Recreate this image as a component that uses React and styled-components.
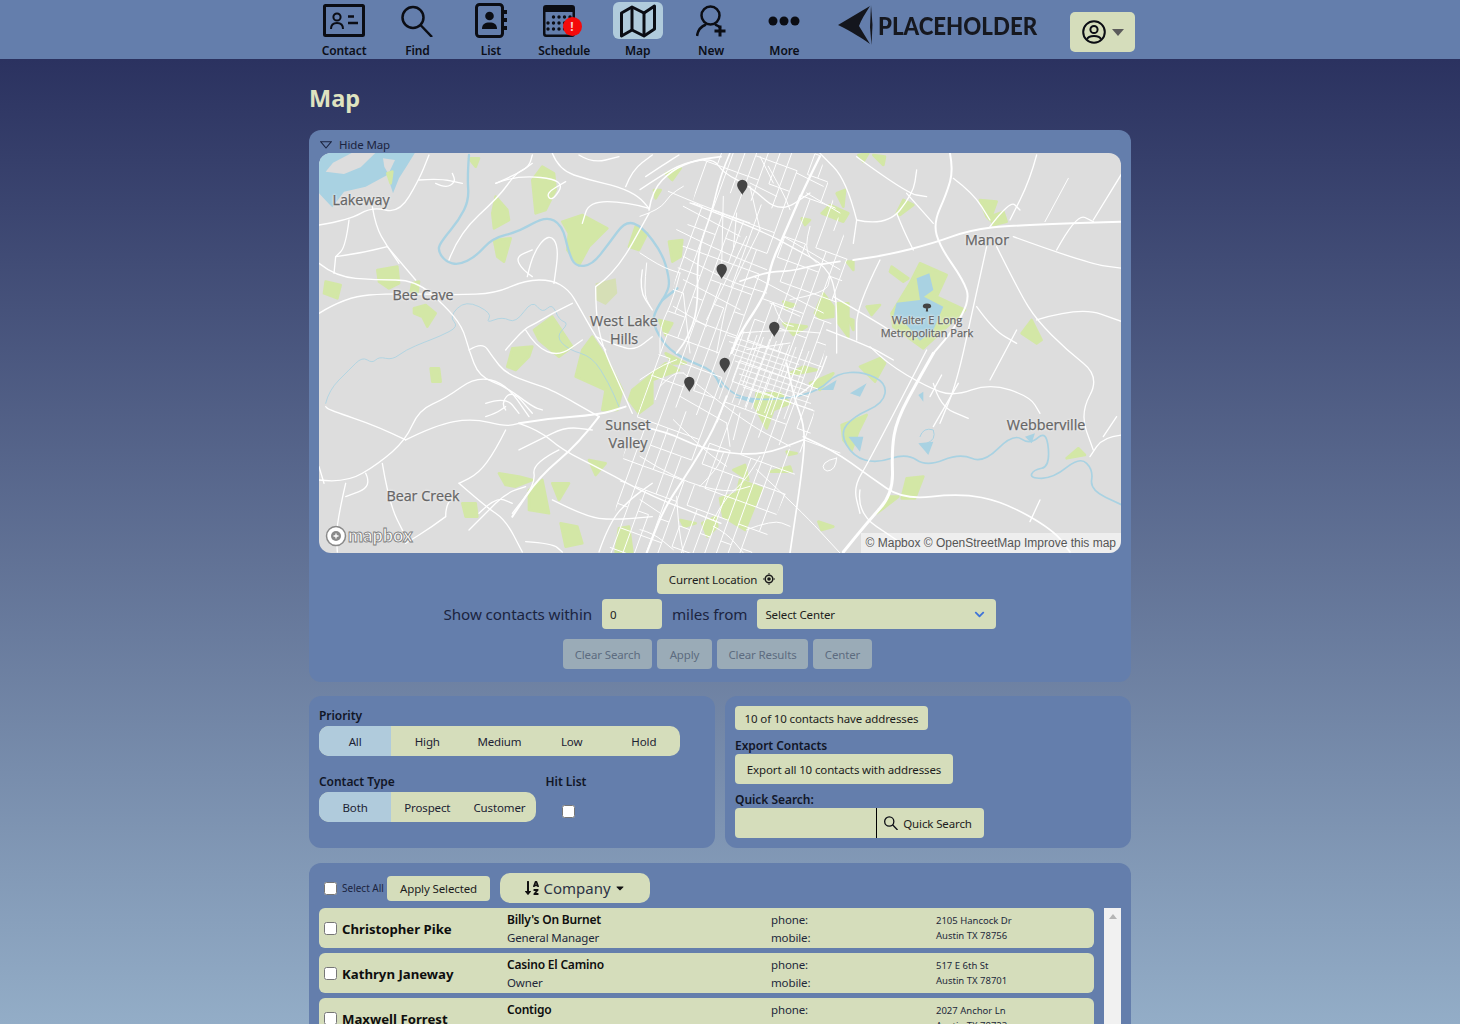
import React from 'react';
import styled, { createGlobalStyle, css } from 'styled-components';
import { FaSortAlphaDown, FaChevronDown, FaCaretDown } from 'react-icons/fa';

const GlobalStyle = createGlobalStyle`
  html, body {
    margin: 0;
    height: 100%;
    overflow: hidden;
  }
  body {
    font-family: 'Noto Sans', 'Open Sans', Arial, sans-serif;
    color: #111;
  }
`;

const smallText = css`
  font-family: 'Noto Sans', 'Open Sans', Arial, sans-serif;
  font-size: 11.5px;
  letter-spacing: -0.13px;
`;

const Page = styled.div`
  height: 1024px;
  overflow: hidden;
  display: flex;
  flex-direction: column;
  background: linear-gradient(180deg, #2b3260 59px, #93adc7 1024px);
`;

const Header = styled.header`
  height: 59px;
  flex: none;
  background: #647eac;
  display: flex;
  padding-left: 307.4px;
`;

const NavItem = styled.a`
  width: 73.4px;
  display: flex;
  flex-direction: column;
  align-items: center;
  position: relative;
`;

const NavIcon = styled.div`
  width: 50px;
  height: 40px;
  margin-top: 2px;
  border-radius: 6px;
  display: flex;
  align-items: center;
  justify-content: center;
  background: ${(p) => (p.$active ? '#b0cbdc' : 'transparent')};
`;

const NavLabel = styled.span`
  font-size: 12px;
  font-weight: 600;
  line-height: 16px;
  margin-top: 4px;
  letter-spacing: -0.1px;
  color: #0c0f18;
`;

const Badge = styled.span`
  position: absolute;
  left: 35px;
  top: 17px;
  width: 19px;
  height: 19px;
  border-radius: 50%;
  background: #f50a0a;
  color: #f6c9c9;
  font-size: 12px;
  font-weight: 700;
  line-height: 19px;
  text-align: center;
`;

const Logo = styled.div`
  display: flex;
  align-items: center;
  gap: 5px;
  margin-left: 16.6px;
  height: 50px;
  width: 232px;
`;

const LogoText = styled.span`
  font-family: 'Lato', 'Noto Sans', sans-serif;
  font-size: 25px;
  font-weight: 900;
  color: #16181f;
  filter: blur(0.5px);
  transform: scaleX(0.89);
  transform-origin: left center;
  white-space: nowrap;
`;

const ProfileButton = styled.button`
  width: 65px;
  height: 40px;
  margin-top: 12px;
  border: 0;
  border-radius: 5px;
  background: #d5ddbb;
  display: flex;
  align-items: center;
  justify-content: center;
  gap: 6px;
  padding: 0 0 0 1px;
`;

const Main = styled.main`
  width: 822px;
  margin-left: 309px;
  display: flex;
  flex-direction: column;
`;

const Title = styled.h1`
  margin: 23px 0 0 0;
  height: 48px;
  font-size: 23.5px;
  line-height: 32px;
  font-weight: 700;
  color: #dfe3c0;
`;

const Panel = styled.section`
  background: #647eac;
  border-radius: 12px;
`;

const MapPanel = styled(Panel)`
  height: 552px;
  box-sizing: border-box;
  padding: 6px 10px 0;
  display: flex;
  flex-direction: column;
  align-items: center;
`;

const HideMap = styled.div`
  ${smallText}
  align-self: flex-start;
  display: flex;
  align-items: center;
  gap: 7px;
  height: 17px;
  padding-left: 1px;
  color: #1b2440;
`;

const MapBox = styled.div`
  width: 802px;
  height: 400px;
  flex: none;
  position: relative;
  overflow: hidden;
  border-radius: 12px;
  background: #dddddd;
`;

const MapLabel = styled.span`
  position: absolute;
  left: ${(p) => p.$x}px;
  top: ${(p) => p.$y}px;
  transform: translate(-50%, -50%);
  font-family: 'Open Sans', sans-serif;
  font-size: ${(p) => p.$size || 14.3}px;
  line-height: ${(p) => p.$line || 18}px;
  text-align: center;
  white-space: nowrap;
  color: #666;
  -webkit-text-stroke: 0.25px #666;
  text-shadow: 0 0 2px #eee, 0 0 2px #eee, 0 0 3px #eee;
`;

const MapboxMark = styled.div`
  position: absolute;
  left: 6px;
  bottom: 6px;
  display: flex;
  align-items: center;
  gap: 1px;
`;

const MapboxWord = styled.span`
  font-family: 'Lato', sans-serif;
  font-size: 18px;
  line-height: 22px;
  font-weight: 900;
  margin-top: -3px;
  color: #fff;
  -webkit-text-stroke: 0.9px #808080;
`;

const Attribution = styled.div`
  position: absolute;
  right: 0;
  bottom: 0;
  height: 20px;
  padding: 0 5px;
  background: rgba(255, 255, 255, 0.5);
  font-family: 'Liberation Sans', Arial, sans-serif;
  font-size: 12px;
  line-height: 20px;
  color: #555;
  white-space: nowrap;
`;

const Button = styled.button`
  ${smallText}
  flex: none;
  border: 0;
  border-radius: 4px;
  height: 30px;
  padding: 0 12px;
  background: #d5ddbb;
  color: #1c1c1c;
  white-space: nowrap;
  display: inline-flex;
  align-items: center;
  justify-content: center;
  gap: 6px;
`;

const LocationButton = styled(Button)`
  margin-top: 11px;
  width: 126px;
  padding: 0 0 0 4px;
`;

const WithinRow = styled.div`
  display: flex;
  align-items: center;
  margin-top: 5px;
  height: 30px;
  font-size: 15.2px;
  letter-spacing: -0.1px;
  color: #1b2440;
`;

const SmallInput = styled.input`
  ${smallText}
  box-sizing: border-box;
  width: 60px;
  height: 30px;
  margin: 0 10px;
  border: 0;
  border-radius: 4px;
  padding: 0 8px;
  background: #d5ddbb;
  color: #222;
`;

const CenterSelect = styled.div`
  ${smallText}
  box-sizing: border-box;
  width: 239px;
  height: 30px;
  margin-left: 10px;
  padding: 0 11px 0 8px;
  border-radius: 4px;
  background: #d5ddbb;
  display: flex;
  align-items: center;
  justify-content: space-between;
  color: #1c1c1c;
`;

const ActionRow = styled.div`
  display: flex;
  gap: 5px;
  margin: 10px 5px 0 0;
`;

const MutedButton = styled(Button)`
  background: #9aabb7;
  color: #5d6c80;
  width: ${(p) => p.$width}px;
  padding: 0;
`;

const FilterRow = styled.div`
  display: flex;
  gap: 10px;
  margin-top: 14px;
`;

const FilterPanel = styled(Panel)`
  width: 406px;
  height: 152px;
  box-sizing: border-box;
  padding: ${(p) => p.$padding};
  display: flex;
  flex-direction: column;
`;

const FieldLabel = styled.div`
  flex: none;
  font-size: 12px;
  font-weight: 600;
  line-height: 16px;
  letter-spacing: -0.05px;
  color: #111627;
`;

const Segments = styled.div`
  display: flex;
  width: max-content;
  height: 30px;
  margin-top: 2px;
  border-radius: 10px;
  overflow: hidden;
  background: #d5ddbb;
`;

const Segment = styled.div`
  ${smallText}
  width: 72.2px;
  display: flex;
  align-items: center;
  justify-content: center;
  color: #1c2233;
  background: ${(p) => (p.$active ? '#b0cbdc' : 'transparent')};
`;

const TypeRow = styled.div`
  display: flex;
  gap: 10px;
  margin-top: 18px;
`;

const HitCheck = styled.input`
  display: block;
  width: 13px;
  height: 13px;
  margin: 15px 0 0 16px;
`;

const Chip = styled.div`
  ${smallText}
  flex: none;
  width: 193px;
  box-sizing: border-box;
  height: 24px;
  border-radius: 4px;
  background: #d5ddbb;
  line-height: 25px;
  text-align: center;
  color: #1c1c1c;
`;

const ExportLabel = styled(FieldLabel)`
  margin-top: 8px;
`;

const ExportButton = styled(Button)`
  width: 218px;
  padding: 0;
`;

const SearchLabel = styled(FieldLabel)`
  margin-top: 8px;
`;

const SearchGroup = styled.div`
  display: flex;
  flex: none;
  width: 249px;
  height: 30px;
`;

const SearchInput = styled.input`
  box-sizing: border-box;
  width: 142px;
  border: 0;
  border-right: 1px solid #000;
  border-radius: 4px 0 0 4px;
  background: #d5ddbb;
  padding: 0 8px;
`;

const SearchButton = styled(Button)`
  width: 107px;
  padding: 0 5px 0 0;
  gap: 5px;
  border-radius: 0 4px 4px 0;
`;

const ContactsPanel = styled(Panel)`
  margin-top: 15px;
  padding: 10px 10px 0;
  flex: none;
`;

const Toolbar = styled.div`
  display: flex;
  align-items: center;
  height: 30px;
`;

const SelectCheck = styled.input`
  width: 13px;
  height: 13px;
  margin: 0 5px 0 5px;
`;

const SelectText = styled.span`
  font-size: 10px;
  color: #1b2440;
  width: 45px;
  white-space: nowrap;
`;

const ApplyButton = styled(Button)`
  width: 103px;
  height: 25px;
  padding: 0;
`;

const SortButton = styled(Button)`
  width: 150px;
  margin-left: 10px;
  border-radius: 10px;
  padding: 0;
  gap: 3px;
  font-size: 15px;
  letter-spacing: 0;
  color: #2b3245;
`;

const ListArea = styled.div`
  display: flex;
  gap: 10px;
  margin-top: 5px;
`;

const Rows = styled.div`
  width: 775px;
  display: flex;
  flex-direction: column;
  gap: 5px;
`;

const Row = styled.div`
  height: 40px;
  border-radius: 6px;
  background: #d5ddbb;
  display: grid;
  grid-template-columns: 188px 264px 165px 1fr;
  align-items: center;
`;

const NameCell = styled.div`
  display: flex;
  align-items: center;
  font-size: 13.2px;
  font-weight: 700;
  color: #0e0e0e;
`;

const NameText = styled.span`
  margin-top: 1px;
`;

const RowCheck = styled.input`
  width: 13px;
  height: 13px;
  margin: 0 5px 0 5px;
`;

const Stack = styled.div`
  ${smallText}
  padding-top: 2px;
  display: flex;
  flex-direction: column;
  line-height: 18px;
  color: #22283a;
`;

const AddressStack = styled(Stack)`
  padding-top: 0;
  font-size: 9.5px;
  letter-spacing: 0;
  line-height: 15px;
`;

const Company = styled.span`
  font-size: 12px;
  font-weight: 600;
  letter-spacing: -0.2px;
  color: #0e0e0e;
`;

const Scrollbar = styled.div`
  width: 17px;
  height: 116px;
  background: #f1f1f1;
  display: flex;
  justify-content: center;
  padding-top: 6px;
  box-sizing: border-box;
`;

const CalendarSvg = styled.svg`
  margin-right: 10px;
`;

const park = '#d3e7a6';
const water = '#a9d2e2';

const smooth = (str) => {
  const p = str.split(' ').map((s) => s.split(',').map(Number));
  let d = `M${p[0][0]} ${p[0][1]}`;
  for (let i = 1; i < p.length - 1; i++) {
    const mx = (p[i][0] + p[i + 1][0]) / 2;
    const my = (p[i][1] + p[i + 1][1]) / 2;
    d += `Q${p[i][0]} ${p[i][1]} ${mx} ${my}`;
  }
  const last = p[p.length - 1];
  return `${d}L${last[0]} ${last[1]}`;
};

const leftParks = [
  '20,395 65,405 55,445 15,430', '175,360 235,350 240,400 210,415 180,395', '280,400 300,395 295,430 275,425',
  '285,475 320,465 350,490 325,530 310,500 285,490', '335,655 360,655 365,695 340,695',
  '640,90 670,50 705,70 710,120 680,180 650,190', '530,140 565,180 570,210 525,235 520,190',
  '525,270 575,265 555,335 535,320', '730,215 790,195 865,235 810,290 780,345 745,300 750,250',
  '950,230 985,250 960,300 930,290', '1050,275 1090,270 1085,320 1060,335',
  '645,540 700,500 760,590 720,620 660,570', '580,595 640,590 630,620 590,660 565,650',
  '790,600 820,560 860,620 910,720 895,780 850,780 860,720 770,680',
  '940,720 1040,640 1080,660 1000,690 1000,760 960,790 930,750', '1020,510 1060,520 1040,555', '1040,610 1100,640 1060,640',
  '810,930 860,940 830,975', '540,970 600,980 640,990 590,1010 560,1005', '430,1060 470,1060 475,1100 440,1100',
  '630,1020 670,990 690,1090 630,1080', '700,1000 750,1000 720,1050', '725,1120 775,1130 790,1180 740,1190',
  '900,1135 930,1130 940,1206 890,1206', '1150,1120 1190,1100 1195,1130 1165,1160', '1085,1110 1130,1120 1095,1130',
  '1040,70 1085,55 1060,90', '1005,120 1025,120 1010,145', '450,25 480,25 470,50', '205,70 220,65 215,100',
];

const rightParks = [
  '415,15 445,10 430,35', '460,15 495,20 490,45', '305,190 330,165 385,190 370,215', '350,130 375,120 370,170',
  '245,205 270,210 255,225', '530,190 550,150 580,165 540,195', '780,150 830,155 810,210 800,200',
  '810,200 850,185 860,215 820,225', '310,430 340,470 340,500 300,505 285,490', '350,460 385,460 385,560 355,520',
  '385,505 400,510 400,540', '440,470 480,465 455,495', '380,335 400,335 400,360', '190,520 260,530 220,555',
  '190,455 225,465 200,475', '210,670 250,650 290,660 240,670', '270,700 340,670 300,720',
  '420,650 480,625 495,640 465,695 440,670', '110,730 180,730 210,760 160,780 140,835 105,770',
  '365,825 440,795 415,845 395,900 370,870', '560,985 610,980 585,1045 545,1045', '470,1090 510,1040 535,1040 510,1060',
  '0,1045 50,1030 60,990 125,1015 75,1140 10,1100', '40,960 75,945 85,990', '1040,925 1075,895 1095,915',
  '905,550 935,510 965,570 950,580', '295,1115 340,1130 305,1140', '200,905 230,910 205,915', '150,965 210,950 215,965 165,965',
  '570,400 600,340 680,375 650,440 735,480 610,595 520,530 515,490', '515,350 565,385 550,395 510,365',
];

const leftRoads = [
  [6, '600,820 680,805 840,795 920,770'],
  [4, '260,870 350,825 460,805 560,830 600,820'],
  [4, '0,990 80,1000 180,940 260,870 300,780 380,745 470,680 560,700 630,800'],
  [4, '0,490 80,440 220,430 410,435 530,430 620,390 700,390 750,420 780,470 830,560 860,600'],
  [4, '0,340 50,380 170,390 290,390 380,470 430,530 450,600 480,680 560,710 640,770 670,780'],
  [4, '205,290 290,390'],
  [4, '0,225 90,210 160,170 240,190 300,90 330,15'],
  [4, '160,170 170,230 205,290 240,340'],
  [4, '50,320 45,370'],
  [4, '50,320 120,310 205,290'],
  [4, '90,210 80,290 50,320'],
  [4, '450,600 490,575 520,620 560,670 640,700 700,720 840,800'],
  [4, '390,330 420,250 540,140 590,70 630,50 640,15'],
  [4, '300,90 360,85 430,100'],
  [4, '350,100 380,115 410,95 400,70'],
  [4, '530,100 600,70 640,40'],
  [4, '530,100 590,75 740,90 700,155 680,130 740,95'],
  [4, '700,10 720,60 810,90 900,110 960,140 990,175'],
  [4, '990,175 920,155 810,155 790,220'],
  [5, '990,180 1000,120 1060,60 1130,30 1206,20'],
  [4, '625,380 640,310 690,250 720,290 705,400'],
  [4, '830,410 890,370 990,190'],
  [4, '830,410 830,490 850,590 900,700 940,790'],
  [4, '560,600 610,540 650,520 700,490 760,460'],
  [4, '620,540 650,590 720,620 790,570'],
  [4, '560,840 530,900 480,970 420,1000'],
  [4, '420,1000 500,1070 560,1110 610,1206'],
  [4, '260,870 180,830 30,780 20,770'],
  [4, '0,950 15,1000'],
  [4, '190,940 210,1060 260,1160'],
  [4, '80,1000 50,1130 55,1206'],
  [4, '140,970 160,1010 80,1040'],
  [4, '380,1100 340,1130 260,1180'],
  [4, '600,820 660,840 730,900 850,960 1000,1040 1206,1120'],
  [4, '720,900 640,940 650,1000 580,1090'],
  [4, '560,780 545,760 580,720 640,790'],
  [4, '700,1050 800,1100 880,1110 1000,1100'],
  [4, '840,1206 870,1120 930,1050 1000,1000'],
  [4, '620,1175 700,1180 730,1206'],
  [4, '600,900 660,870 740,830 820,840'],
  [4, '450,1140 500,1090 560,1030 620,1010'],
  [6, '840,800 780,880 660,980 580,1100'],
  [4, '970,360 960,420 1000,480'],
  [4, '830,560 900,590 950,600 1000,560'],
  [4, '500,760 560,740 600,790'],
  [4, '480,1090 530,1040 580,1060'],
  [4, '500,800 530,790 560,770'],
  [4, '380,1100 380,1060 420,1030'],
  [4, '640,380 610,360 590,320 640,300'],
  [4, '920,110 940,60 1000,15'],
  [4, '780,15 820,40 900,20'],
  [4, '980,80 1040,40 1080,15'],
];

const rightRoads = [
  [6, '1206,215 880,225 750,240 640,280 500,315 400,330'],
  [6, '690,10 700,60 680,130 640,220 660,290 730,390 750,450 700,540 640,610'],
  [9, '640,610 600,680 530,810 515,900 520,1030 440,1120 370,1206'],
  [5, '250,860 340,900 450,980 550,1050 720,1030 850,1055 1000,1140 1050,1206'],
  [4, '880,260 1100,340 1206,355'],
  [4, '800,290 760,470 710,700 660,820'],
  [4, '830,290 900,430 950,510 1040,600 1140,680 1080,790 1120,900'],
  [4, '1010,300 1070,190 1120,215'],
  [3, '975,215 1045,85'],
  [4, '1120,210 1206,70'],
  [4, '950,15 930,90 870,210'],
  [4, '810,230 870,150 900,180'],
  [4, '700,85 760,130 810,210'],
  [4, '410,210 500,230 580,130 590,60'],
  [4, '410,210 380,90 300,10'],
  [4, '410,210 400,280'],
  [4, '560,130 640,220'],
  [4, '340,440 460,510 540,560'],
  [4, '450,590 500,640 620,710 700,740 810,700 930,740 960,790'],
  [4, '890,540 810,690'],
  [4, '770,470 820,540 890,580'],
  [4, '320,540 450,590 520,630'],
  [4, '620,600 450,930 400,1010 420,1090'],
  [4, '960,1050 930,1115'],
  [4, '1206,855 1150,860 1110,920'],
  [4, '1190,800 1150,860'],
  [4, '950,510 1080,470 1206,515'],
  [4, '640,700 660,770 745,805'],
  [4, '665,675 630,740'],
  [4, '715,700 640,830'],
  [4, '530,190 550,240 580,300'],
  [4, '480,330 410,470 410,570'],
  [4, '410,20 560,130 620,140'],
  [4, '420,1020 410,1090 530,1170'],
];

// traced from the city centre, in 3x coordinates of a 200x200 tile
const cityTop = [
  [5, '270,0 240,70 215,180 170,300 175,470 140,560 110,600'],
  [7, '540,10 490,110 430,250 390,340 380,420 300,540 275,600'],
  [5, '600,325 530,335 450,355 390,355 300,385'],
  [4, '150,150 360,230 470,290 560,340 590,420 590,600'],
  [4, '0,110 60,70 130,30 220,15 250,60 330,100 420,180 510,120'],
  [3, '330,100 360,230'],
  [3, '250,130 245,340'],
  [3, '320,250 250,400 200,500'],
  [3, '360,230 310,330 260,440 230,600'],
  [3, '290,180 280,290'],
  [3, '85,115 190,160 330,210'],
  [3, '130,160 300,250'],
  [3, '110,230 230,290 380,350'],
  [3, '130,310 250,380 380,420'],
  [3, '130,380 300,470'],
  [3, '100,460 200,520'],
  [3, '340,370 550,480'],
  [3, '430,250 600,350'],
  [3, '500,120 600,180'],
  [3, '470,60 550,100'],
  [3, '385,40 430,120 450,170'],
  [3, '360,10 400,90'],
  [3, '330,90 410,130'],
  [3, '510,220 490,290 530,330'],
  [3, '450,440 560,420 570,370'],
  [3, '300,540 420,530 540,540'],
  [3, '320,590 450,570'],
  [3, '390,450 480,490'],
  [3, '400,450 420,510 460,520'],
  [3, '0,190 60,170 90,125 130,100'],
  [3, '120,360 100,440 60,520 60,600'],
  [3, '130,420 150,600'],
  [3, '0,300 60,340 120,360'],
  [3, '20,330 10,420 30,460'],
];

const cityBottom = [
  [6, '260,130 230,210 180,300 130,380 70,470 20,600'],
  [5, '0,220 80,235 190,290 360,310 490,260'],
  [5, '440,30 460,130 495,220 490,330 450,600'],
  [4, '470,130 530,90 560,10'],
  [3, '490,260 600,300'],
  [3, '590,315 565,320 545,340 560,358 585,345 590,315'],
  [3, '360,310 320,380 260,430 220,500'],
  [3, '130,60 300,200 450,280'],
  [3, '120,130 260,210'],
  [3, '100,200 190,290 260,340'],
  [3, '0,310 110,380 260,420 330,400'],
  [3, '350,350 480,470 600,600'],
  [3, '110,430 115,520 130,600'],
  [3, '180,400 230,350 250,300'],
  [3, '260,210 270,280'],
  [3, '300,180 280,260'],
  [3, '0,440 60,480'],
  [3, '220,520 260,540 310,600'],
  [3, '320,530 400,500 450,520'],
  [3, '0,530 40,540 100,590'],
  [3, '60,100 100,60 130,60'],
  [3, '0,80 60,40 110,20'],
];

const cityGrid = () => {
  const out = [];
  const angle = (20 * Math.PI) / 180;
  const ux = Math.sin(angle);
  const uy = -Math.cos(angle);
  const hash = (a, b, s) => (((a * 73 + b * 151 + a * b * 17 + s) % 10) + 10) % 10;
  for (let i = -30; i <= 30; i++) {
    for (let j = -14; j < 14; j++) {
      const a = 400 + i * 11 * -uy + j * 22 * ux;
      const b = 200 + i * 11 * ux + j * 22 * uy;
      if (hash(i, j, 3) < 8) {
        out.push(`M${a.toFixed(1)} ${b.toFixed(1)}L${(a + 22 * ux).toFixed(1)} ${(b + 22 * uy).toFixed(1)}`);
      }
      if (hash(j, i, 8) < 8) {
        out.push(`M${a.toFixed(1)} ${b.toFixed(1)}L${(a - 11 * uy).toFixed(1)} ${(b + 11 * ux).toFixed(1)}`);
      }
    }
  }
  return out.join('');
};

const downtownGrid = () => {
  const out = [];
  for (let i = 0; i < 11; i++) {
    out.push(`M${425 + i * 6.5} ${178 + i * 2}L${400 + i * 6.5} ${246 + i * 2}`);
  }
  for (let i = 0; i < 9; i++) {
    out.push(`M${408 + i * 2} ${182 + i * 6.5}L${478 + i * 2} ${205 + i * 6.5}`);
  }
  return out.join('');
};

const RoadSet = ({ roads }) =>
  roads.map(([w, p]) => <path key={p} d={smooth(p)} stroke="#fff" strokeWidth={w} />);

const ParkSet = ({ shapes }) =>
  shapes.map((p) => <polygon key={p} points={p} fill={park} stroke={park} strokeWidth="8" />);

const Pin = ({ x, y }) => (
  <path
    transform={`translate(${x} ${y})`}
    d="M0 7C-1 4-5.200 .5-5.200-3a5.200 5.200 0 0 1 10.400 0C5.200 .5 1 4 0 7Z"
    fill="#444"
  />
);

const MapArt = () => (
  <svg width="802" height="400" viewBox="0 0 802 400" style={{ display: 'block' }}>
    <clipPath id="city">
      <path d="M385 0L500 0L530 100L505 200L490 290L440 400L290 400L305 300L340 200L362 100Z" />
    </clipPath>
    <g transform="translate(0 -3) scale(.3333)" fill="none" strokeLinecap="round" strokeLinejoin="round">
      <path d="M0 5H290L262 50L240 85L222 130L205 75L140 110L75 125L40 172L28 160L0 130Z" fill={water} />
      <path d="M100 8L170 8L125 52L75 72L20 65L42 38Z" fill="#dddddd" />
      <path d="M192 25L228 30L208 72L196 50Z" fill="#dddddd" />
      <ParkSet shapes={leftParks} />
      <polygon points="830,400 890,385 895,430 860,465 830,450" fill="#d6dfb6" />
      <path
        d={smooth('450,15 445,80 450,150 420,210 370,270 355,300 380,335 420,345 470,320 520,265 600,245 680,198 730,225 750,310 770,350 820,345 870,280 920,212 970,230 1030,310 1050,380 1050,420 1010,480 1000,520 1040,590 1100,630 1180,660 1206,710')}
        stroke={water}
        strokeWidth="7"
      />
      <path d="M1030 450L1075 415" stroke={water} strokeWidth="8" />
      <path
        d={smooth('20,760 30,720 90,660 130,620 160,640 180,620 220,630 260,600 320,575 360,560 420,530 390,500 440,450 520,490 500,520 550,500 590,520 640,450 670,490 700,460 720,510 750,520 710,560 750,600 820,620 870,700 900,770')}
        stroke={water}
        strokeWidth="2.500"
      />
      <RoadSet roads={leftRoads} />
    </g>
    <g transform="translate(401 -3) scale(.3333)" fill="none" strokeLinecap="round" strokeLinejoin="round">
      <ParkSet shapes={rightParks} />
      <path
        d="M590 385L628 370L640 420L612 440L670 470L640 540L600 572L560 525L520 500L530 458L600 450Z"
        fill={water}
      />
      <path
        d={smooth('0,690 30,730 100,750 210,745 300,720 350,670 430,665 500,700 490,760 400,800 360,850 400,920 470,940 560,910 620,950 720,910 790,940 880,850 930,885 980,840 990,950 940,960 930,985 1000,985 1080,920 1120,960 1110,1020 1206,1065')}
        stroke={water}
        strokeWidth="5"
      />
      <path d="M40 740L105 745L100 760Z" fill={water} />
      <path d="M300 720L350 690L340 720ZM390 730L440 700L420 740ZM385 860L430 860L420 905ZM595 880L640 875L625 915Z" fill={water} />
      <path d="M595 735L610 725L610 755ZM915 860L945 850L935 880Z" fill={water} />
      <path d="M600 860Q610 830 640 840Q650 870 620 880" stroke={water} strokeWidth="3" />
      <RoadSet roads={rightRoads} />
    </g>
    <g clipPath="url(#city)" fill="none" stroke="#fff">
      <path d={cityGrid()} strokeWidth="1" />
      <path d={downtownGrid()} strokeWidth="0.9" />
    </g>
    <g transform="translate(321 0) scale(.3333)" fill="none" strokeLinecap="round" strokeLinejoin="round">
      <RoadSet roads={cityTop} />
    </g>
    <g transform="translate(321 200) scale(.3333)" fill="none" strokeLinecap="round" strokeLinejoin="round">
      <RoadSet roads={cityBottom} />
    </g>
    <path d="M608 150.500c-3 0-4.200 1.400-4.200 2.700s1.300 2.200 3.400 2.200l-.4 3h2.400l-.4-3c2.100 0 3.400-.9 3.400-2.200s-1.200-2.700-4.200-2.700Z" fill="#444" />
    <Pin x={423.3} y={35} />
    <Pin x={402.7} y={119} />
    <Pin x={455.3} y={177} />
    <Pin x={405.7} y={213} />
    <Pin x={370.3} y={232} />
  </svg>
);

const ContactIcon = () => (
  <svg width="42" height="33" viewBox="0 0 42 33" fill="none" stroke="#0b0d14">
    <rect x="1.500" y="1.500" width="39" height="30" rx="1" strokeWidth="3" />
    <circle cx="14" cy="13" r="3.600" strokeWidth="2" />
    <path d="M8 25c0-4.500 2.500-6 6-6s6 1.500 6 6" strokeWidth="2" />
    <path d="M25 12.500h6M25 19h10" strokeWidth="2.400" />
  </svg>
);

const SearchIcon = ({ size = 32, width = 2.5 }) => (
  <svg width={size} height={size} viewBox="0 0 32 32" fill="none" stroke="#0b0d14" strokeWidth={width}>
    <circle cx="12" cy="12.500" r="10.500" />
    <path d="M19.500 20L31 32" />
  </svg>
);

const BookIcon = () => (
  <svg width="32" height="35" viewBox="0 0 32 35" fill="#0b0d14">
    <rect x="1.500" y="1.500" width="26" height="32" rx="3" fill="none" stroke="#0b0d14" strokeWidth="3" />
    <path d="M29 7h3v4h-3zM29 15h3v4h-3zM29 23h3v4h-3z" />
    <circle cx="14.500" cy="13" r="4.300" />
    <path d="M7 26c0-5 3-6.500 7.500-6.500S22 21 22 26Z" />
  </svg>
);

const CalendarIcon = () => (
  <CalendarSvg width="32" height="32" viewBox="0 0 32 32" fill="#0b0d14">
    <path d="M3 0h26a3 3 0 0 1 3 3v26a3 3 0 0 1-3 3H3a3 3 0 0 1-3-3V3a3 3 0 0 1 3-3Zm-.5 7v21.500a1 1 0 0 0 1 1h25a1 1 0 0 0 1-1V7Z" />
    {[12, 18, 24].map((y, r) => [5, 10.5, 16, 21.5, 27].map((x, c) => (r === 0 && c === 0 ? null : <circle key={`${x}-${y}`} cx={x} cy={y} r="1.700" />)))}
  </CalendarSvg>
);

const FoldedMapIcon = () => (
  <svg width="36" height="34" viewBox="0 0 36 34" fill="none" stroke="#0b0d14" strokeWidth="3" strokeLinejoin="round">
    <path d="M1.500 9L12 3L24 9L34.500 2V25L24 32L12 26L1.500 32Z" />
    <path d="M12 3V26M24 9V32" />
  </svg>
);

const NewUserIcon = () => (
  <svg width="30" height="32" viewBox="0 0 30 32" fill="none" stroke="#0b0d14" strokeWidth="2.500">
    <circle cx="14.500" cy="10.500" r="9" />
    <path d="M1 31C2 24 6 21 10 19.500M19 19.500c2 .7 4 1.800 5.500 3.500" />
    <path d="M18.500 26h11M24 20.500v11" strokeWidth="3" />
  </svg>
);

const DotsIcon = () => (
  <svg width="32" height="10" viewBox="0 0 32 10" fill="#0b0d14">
    <circle cx="5" cy="5" r="4.500" />
    <circle cx="16" cy="5" r="4.500" />
    <circle cx="27" cy="5" r="4.500" />
  </svg>
);

const LogoMark = () => (
  <svg width="35" height="40" viewBox="0 0 35 40" fill="#14161d">
    <path d="M0 20L32 1C27 9 23 15 21 21L32 39C24 33 14 27 0 20Z" />
    <path d="M33 0L34.500 20L33.500 40L32 22Z" />
  </svg>
);

const UserCircleIcon = () => (
  <svg width="24" height="24" viewBox="0 0 24 24" fill="none" stroke="#0b0d14" strokeWidth="2">
    <circle cx="12" cy="12" r="10.800" />
    <circle cx="12" cy="9.500" r="3.600" />
    <path d="M5 19.500c1-3 3.500-3.500 7-3.500s6 .5 7 3.500" />
  </svg>
);

const CaretIcon = () => (
  <svg width="12" height="7" viewBox="0 0 12 7" fill="#5b5b5b">
    <path d="M0 0H12L6 7Z" />
  </svg>
);

const LocateIcon = () => (
  <svg width="12" height="12" viewBox="0 0 12 12" fill="none" stroke="#1a1a1a" strokeWidth="1.500">
    <circle cx="6" cy="6" r="3.800" />
    <circle cx="6" cy="6" r="1.800" fill="#1a1a1a" stroke="none" />
    <path d="M6 0v1.500M6 10.500V12M0 6h1.500M10.500 6H12" strokeWidth="1" />
  </svg>
);

const ToggleIcon = () => (
  <svg width="12" height="8" viewBox="0 0 12 8" fill="none" stroke="#1b2440" strokeWidth="1.100">
    <path d="M.8.8h10.400L6 7Z" />
  </svg>
);

const navItems = [
  { label: 'Contact', icon: <ContactIcon /> },
  { label: 'Find', icon: <SearchIcon /> },
  { label: 'List', icon: <BookIcon /> },
  { label: 'Schedule', icon: <CalendarIcon />, badge: true },
  { label: 'Map', icon: <FoldedMapIcon />, active: true },
  { label: 'New', icon: <NewUserIcon /> },
  { label: 'More', icon: <DotsIcon /> },
];

const contacts = [
  { name: 'Christopher Pike', company: "Billy's On Burnet", title: 'General Manager', street: '2105 Hancock Dr', city: 'Austin TX 78756' },
  { name: 'Kathryn Janeway', company: 'Casino El Camino', title: 'Owner', street: '517 E 6th St', city: 'Austin TX 78701' },
  { name: 'Maxwell Forrest', company: 'Contigo', title: 'Chef', street: '2027 Anchor Ln', city: 'Austin TX 78723' },
];

const labels = [
  { x: 42, y: 47, text: ['Lakeway'] },
  { x: 104, y: 142, text: ['Bee Cave'] },
  { x: 305, y: 177, text: ['West Lake', 'Hills'] },
  { x: 309, y: 281, text: ['Sunset', 'Valley'] },
  { x: 104, y: 343, text: ['Bear Creek'] },
  { x: 668, y: 87, text: ['Manor'] },
  { x: 727, y: 272, text: ['Webberville'] },
  { x: 608, y: 173, size: 11, line: 13, text: ['Walter E Long', 'Metropolitan Park'] },
];

export default function App() {
  return (
    <Page>
      <GlobalStyle />
      <Header>
        {navItems.map((item) => (
          <NavItem key={item.label}>
            <NavIcon $active={item.active}>{item.icon}</NavIcon>
            <NavLabel>{item.label}</NavLabel>
            {item.badge && <Badge>!</Badge>}
          </NavItem>
        ))}
        <Logo>
          <LogoMark />
          <LogoText>PLACEHOLDER</LogoText>
        </Logo>
        <ProfileButton>
          <UserCircleIcon />
          <CaretIcon />
        </ProfileButton>
      </Header>
      <Main>
        <Title>Map</Title>
        <MapPanel>
          <HideMap>
            <ToggleIcon />
            Hide Map
          </HideMap>
          <MapBox>
            <MapArt />
            {labels.map((l) => (
              <MapLabel key={l.text[0]} $x={l.x} $y={l.y} $size={l.size} $line={l.line}>
                {l.text.map((t, i) => (
                  <React.Fragment key={t}>
                    {i > 0 && <br />}
                    {t}
                  </React.Fragment>
                ))}
              </MapLabel>
            ))}
            <MapboxMark>
              <svg width="22" height="22" viewBox="0 0 22 22">
                <circle cx="11" cy="11" r="9.500" fill="#fff" stroke="#8a8a8a" strokeWidth="1.500" />
                <circle cx="11" cy="11" r="5" fill="#8a8a8a" />
                <path d="M11 8.500v5M8.500 11h5" stroke="#fff" strokeWidth="1.300" />
              </svg>
              <MapboxWord>mapbox</MapboxWord>
            </MapboxMark>
            <Attribution>© Mapbox © OpenStreetMap Improve this map</Attribution>
          </MapBox>
          <LocationButton>
            Current Location
            <LocateIcon />
          </LocationButton>
          <WithinRow>
            Show contacts within
            <SmallInput defaultValue="0" />
            miles from
            <CenterSelect>
              Select Center
              <FaChevronDown size={11} color="#3f74d8" />
            </CenterSelect>
          </WithinRow>
          <ActionRow>
            <MutedButton $width={89}>Clear Search</MutedButton>
            <MutedButton $width={55}>Apply</MutedButton>
            <MutedButton $width={91}>Clear Results</MutedButton>
            <MutedButton $width={59}>Center</MutedButton>
          </ActionRow>
        </MapPanel>
        <FilterRow>
          <FilterPanel $padding="12px 10px">
            <FieldLabel>Priority</FieldLabel>
            <Segments>
              <Segment $active>All</Segment>
              <Segment>High</Segment>
              <Segment>Medium</Segment>
              <Segment>Low</Segment>
              <Segment>Hold</Segment>
            </Segments>
            <TypeRow>
              <div>
                <FieldLabel>Contact Type</FieldLabel>
                <Segments>
                  <Segment $active>Both</Segment>
                  <Segment>Prospect</Segment>
                  <Segment>Customer</Segment>
                </Segments>
              </div>
              <div>
                <FieldLabel>Hit List</FieldLabel>
                <HitCheck type="checkbox" />
              </div>
            </TypeRow>
          </FilterPanel>
          <FilterPanel $padding="10px">
            <Chip>10 of 10 contacts have addresses</Chip>
            <ExportLabel>Export Contacts</ExportLabel>
            <ExportButton>Export all 10 contacts with addresses</ExportButton>
            <SearchLabel>Quick Search:</SearchLabel>
            <SearchGroup>
              <SearchInput />
              <SearchButton>
                <SearchIcon size={14} width={3} />
                Quick Search
              </SearchButton>
            </SearchGroup>
          </FilterPanel>
        </FilterRow>
        <ContactsPanel>
          <Toolbar>
            <SelectCheck type="checkbox" />
            <SelectText>Select All</SelectText>
            <ApplyButton>Apply Selected</ApplyButton>
            <SortButton>
              <FaSortAlphaDown size={16} color="#111" />
              Company
              <FaCaretDown size={12} color="#111" />
            </SortButton>
          </Toolbar>
          <ListArea>
            <Rows>
              {contacts.map((c) => (
                <Row key={c.name}>
                  <NameCell>
                    <RowCheck type="checkbox" />
                    <NameText>{c.name}</NameText>
                  </NameCell>
                  <Stack>
                    <Company>{c.company}</Company>
                    <span>{c.title}</span>
                  </Stack>
                  <Stack>
                    <span>phone:</span>
                    <span>mobile:</span>
                  </Stack>
                  <AddressStack>
                    <span>{c.street}</span>
                    <span>{c.city}</span>
                  </AddressStack>
                </Row>
              ))}
            </Rows>
            <Scrollbar>
              <svg width="8" height="5" viewBox="0 0 8 5">
                <path d="M4 0L8 5H0Z" fill="#b5b5b5" />
              </svg>
            </Scrollbar>
          </ListArea>
        </ContactsPanel>
      </Main>
    </Page>
  );
}
